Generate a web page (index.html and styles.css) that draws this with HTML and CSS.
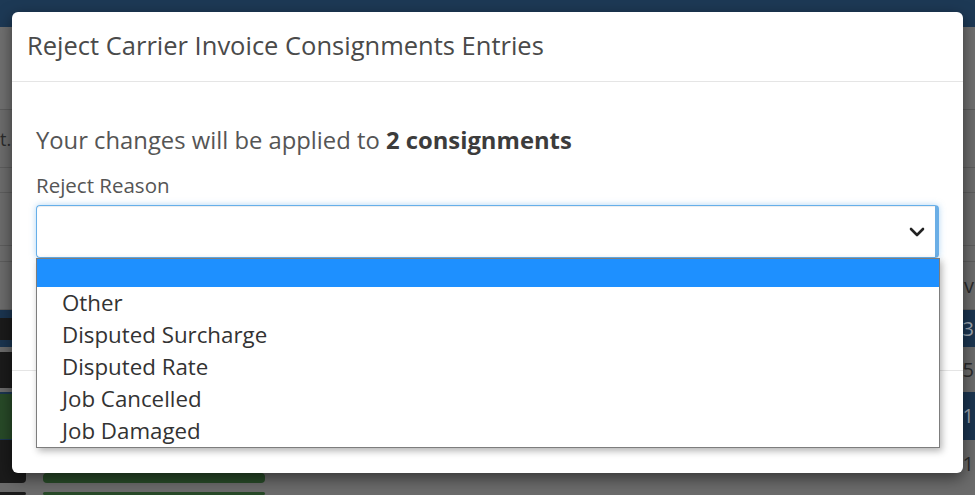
FILE: index.html
```html
<!DOCTYPE html>
<html lang="en">
<head>
<meta charset="utf-8">
<title>Reject Carrier Invoice Consignments Entries</title>
<link rel="stylesheet" href="styles.css">
</head>
<body>
<div class="app">
  <div class="topbar"></div>
  <div class="grid">
    <div class="grow g1"></div>
    <div class="grow g2"><span class="frag-l">t.</span></div>
    <div class="grow g3"></div>
    <div class="grow g4"></div>
    <div class="grow g5"></div>
    <div class="grow g6"><span class="frag-r">nv</span></div>
    <div class="trow navy t1"><span class="btn black b1"></span><span class="frag-r light">3</span></div>
    <div class="trow gray t2"><span class="btn black b2"></span><span class="frag-r">5</span></div>
    <div class="trow navy t3"><span class="btn green b3"></span><span class="frag-r light">1</span></div>
    <div class="trow gray t4"><span class="btn black b4"></span><span class="btn green wide"></span><span class="frag-r">1</span></div>
    <div class="trow gray t5"><span class="btn black b5"></span><span class="btn green wide"></span></div>
  </div>
</div>

<div class="modal">
  <div class="modal-content">
    <div class="modal-header">
      <h4 class="modal-title">Reject Carrier Invoice Consignments Entries</h4>
    </div>
    <div class="modal-body">
      <p class="summary">Your changes will be applied to <b>2 consignments</b></p>
      <label class="field-label">Reject Reason</label>
      <div class="select-wrap">
        <div class="select">
          <svg class="chevron" width="16" height="10" viewBox="0 0 16 10"><path d="M2 2 L8 8 L14 2" fill="none" stroke="#222" stroke-width="2.6" stroke-linecap="round" stroke-linejoin="round"/></svg>
        </div>
        <ul class="options">
          <li class="opt selected"></li>
          <li class="opt">Other</li>
          <li class="opt">Disputed Surcharge</li>
          <li class="opt">Disputed Rate</li>
          <li class="opt">Job Cancelled</li>
          <li class="opt">Job Damaged</li>
        </ul>
      </div>
    </div>
    <div class="modal-footer"></div>
  </div>
</div>
</body>
</html>
```
FILE: styles.css
```css
* { box-sizing: border-box; }
html, body { margin: 0; padding: 0; }
body {
  width: 975px;
  height: 495px;
  overflow: hidden;
  background: #6b6b6b;
  font-family: "Open Sans", "Liberation Sans", sans-serif;
  position: relative;
}

/* background application (already dimmed by overlay) */
.app { width: 975px; height: 495px; overflow: hidden; }
.topbar { height: 27px; background: #1d3955; }
.grid { display: flex; flex-direction: column; }
.grow {
  background: #6c6c6c;
  border-bottom: 1px solid #5d5d5d;
  display: flex;
  align-items: center;
  justify-content: space-between;
  font-size: 20px;
  color: #2b2b2b;
  overflow: hidden;
}
.g1 { height: 83px; background: #707070; }
.g2 { height: 58px; }
.g3 { height: 25px; }
.g4 { height: 53px; }
.g5 { height: 16px; }
.g6 { height: 48px; }
.frag-l { margin-left: 0; font-size: 18px; line-height: 20px; }
.frag-r { margin-left: auto; margin-right: 1px; font-size: 20px; line-height: 22px; color: #2a2a2a; }
.frag-r.light { color: #9aa3ad; }

.trow {
  display: flex;
  align-items: center;
  gap: 17px;
  overflow: hidden;
}
.navy { background: #1b3550; }
.gray { background: #6b6b6b; }
.t1 { height: 37px; }
.t2 { height: 45px; }
.t3 { height: 48px; }
.t4 { height: 48px; }
.t5 { height: 7px; align-items: flex-start; padding-top: 4px; }
.btn { display: block; flex: none; border-radius: 0 4px 4px 0; }
.black { background: #1b1b1b; width: 26px; }
.green { background: #284a28; }
.b1 { height: 22px; }
.b2 { height: 36px; }
.b3 { height: 45px; width: 26px; }
.b4 { height: 43px; align-self: flex-start; }
.b5 { height: 3px; }
.wide { width: 222px; height: 10px; border-radius: 4px; align-self: flex-end; margin-bottom: 5px; }
.t5 .wide { align-self: flex-start; margin: 0; height: 3px; }

/* modal */
.modal {
  position: absolute;
  inset: 0;
  padding: 12px 12px 22px 12px;
  display: flex;
}
.modal-content {
  flex: 1;
  background: #fff;
  border-radius: 6px;
  box-shadow: 0 5px 15px rgba(0, 0, 0, .5);
  display: flex;
  flex-direction: column;
}
.modal-header {
  height: 70px;
  padding: 0 15px;
  border-bottom: 1px solid #e5e5e5;
  display: flex;
  align-items: center;
}
.modal-title {
  margin: 0;
  font-size: 25.5px;
  font-weight: 400;
  color: #4a4a4a;
  line-height: 1.1;
  padding-bottom: 2px;
}
.modal-body {
  height: 288px;
  padding: 44px 24px 0 24px;
}
.summary {
  margin: 0;
  font-size: 23.8px;
  line-height: 28px;
  color: #555;
}
.summary b { font-weight: 700; color: #3c3c3c; }
.field-label {
  display: block;
  margin-top: 19px;
  font-size: 20.5px;
  line-height: 24px;
  color: #555;
}
.select-wrap {
  position: relative;
  margin-top: 8px;
}
.select {
  height: 53px;
  border: 1px solid #66afe9;
  border-right: 4px solid #6aaee6;
  border-radius: 4px;
  box-shadow: inset 0 1px 1px rgba(0,0,0,.075), 0 0 6px rgba(102,175,233,.5);
  display: flex;
  align-items: center;
  justify-content: flex-end;
  padding-right: 10px;
  padding-top: 1px;
}
.chevron { display: block; }
.options {
  position: absolute;
  top: 53px;
  left: 0;
  right: -1px;
  margin: 0;
  padding: 0;
  list-style: none;
  background: #fff;
  border: 1px solid #7d7d7d;
  box-shadow: 2px 3px 7px rgba(0,0,0,.3);
}
.opt {
  height: 32px;
  padding-left: 25px;
  font-size: 22.3px;
  line-height: 32px;
  color: #333;
}
.opt.selected { height: 28px; background: #1e90ff; }
.modal-footer {
  flex: 1;
  border-top: 1px solid #e5e5e5;
}
```
